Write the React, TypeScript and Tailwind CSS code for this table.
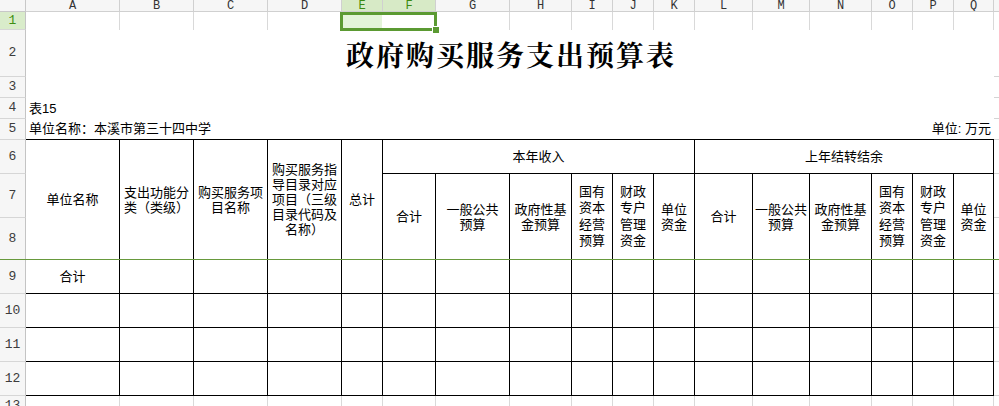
import React from 'react';

const COLS = ['A', 'B', 'C', 'D', 'E', 'F', 'G', 'H', 'I', 'J', 'K', 'L', 'M', 'N', 'O', 'P', 'Q'];

const CJK = "font-['Liberation_Sans','Noto_Sans_CJK_SC',sans-serif]";
const MONO = "font-['Liberation_Mono','DejaVu_Sans_Mono',monospace]";

// table cell: black right + bottom border, centered text
const cell = `border-r border-b border-black flex flex-col items-center justify-center text-center text-[13px] leading-[15px] text-black ${CJK}`;

const SUB_HEADERS: { lines: string[]; lead?: string }[] = [
  { lines: ['合计'] },
  { lines: ['一般公共', '预算'] },
  { lines: ['政府性基', '金预算'] },
  { lines: ['国有', '资本', '经营', '预算'], lead: 'leading-[16.5px]' },
  { lines: ['财政', '专户', '管理', '资金'], lead: 'leading-[16.5px]' },
  { lines: ['单位', '资金'] },
];

function RowHead({ n, active = false }: { n: number; active?: boolean }) {
  return (
    <div
      className={`flex items-center justify-center border-r border-b border-r-[#c4c4c4] border-b-[#d6d6d6] text-[13px] ${MONO} ${
        active ? 'bg-[#d9ecca] text-[#3f8f12]' : 'bg-[#f6f6f6] text-[#3c3c3c]'
      }`}
    >
      {n}
    </div>
  );
}

// column R, only a sliver of it is visible at the right edge
function Edge() {
  return <div className="border-b border-[#d4d4d4]" />;
}

function Lines({ lines }: { lines: string[] }) {
  return (
    <>
      {lines.map((l) => (
        <span key={l} className="whitespace-nowrap">
          {l}
        </span>
      ))}
    </>
  );
}

export default function App() {
  return (
    <div className="relative h-[406px] w-[999px] overflow-hidden bg-white">
      <div className="grid h-full grid-cols-[26px_94px_74px_74px_74px_41px_53px_74px_62px_41px_41px_41px_58px_57px_62px_41px_41px_40px_1fr] grid-rows-[12px_18px_47px_21px_21px_21px_34px_44px_42px_34px_34px_34px_34px_1fr]">
        {/* column headers */}
        <div className="border-r border-b border-[#c8c8c8] bg-[#f6f6f6]" />
        {COLS.map((c) => {
          const active = c === 'E' || c === 'F';
          return (
            <div
              key={c}
              className={`flex items-center justify-center overflow-hidden border-r border-b border-[#d0d0d0] text-[12px] leading-[10px] ${MONO} ${
                active ? 'bg-[#d7eac6] text-[#3c8a10]' : 'bg-[#f6f6f6] text-[#333]'
              }`}
            >
              {c}
            </div>
          );
        })}
        <div className="border-b border-[#d0d0d0] bg-[#f6f6f6]" />

        {/* row 1 */}
        <RowHead n={1} active />
        {COLS.map((c) => (
          <div
            key={c}
            className={`border-r ${c === 'E' ? 'border-white bg-[#e3f4d9]' : 'border-[#d9d9d9]'}`}
          />
        ))}
        <div />

        {/* row 2 : title */}
        <RowHead n={2} />
        <div className="col-span-17 flex items-center justify-center">
          <span className="pl-[2px] text-[28px] font-bold tracking-[2px] text-black font-['Noto_Serif_CJK_SC','Noto_Sans_CJK_SC',serif]">
            政府购买服务支出预算表
          </span>
        </div>
        <Edge />

        {/* row 3 */}
        <RowHead n={3} />
        <div className="col-span-17" />
        <Edge />

        {/* row 4 */}
        <RowHead n={4} />
        <div className={`col-span-17 flex items-center pl-[3px] text-[13px] text-black ${CJK}`}>表15</div>
        <Edge />

        {/* row 5 */}
        <RowHead n={5} />
        <div
          className={`col-span-17 flex items-center justify-between border-b border-black pl-[3px] pr-[3px] text-[13px] text-black ${CJK}`}
        >
          <span>单位名称：本溪市第三十四中学</span>
          <span>单位: 万元</span>
        </div>
        <Edge />

        {/* row 6 */}
        <RowHead n={6} />
        <div className={`${cell} row-span-3`}>单位名称</div>
        <div className={`${cell} row-span-3`}>
          <Lines lines={['支出功能分', '类（类级）']} />
        </div>
        <div className={`${cell} row-span-3`}>
          <Lines lines={['购买服务项', '目名称']} />
        </div>
        <div className={`${cell} row-span-3`}>
          <Lines lines={['购买服务指', '导目录对应', '项目（三级', '目录代码及', '名称）']} />
        </div>
        <div className={`${cell} row-span-3`}>总计</div>
        <div className={`${cell} col-span-6`}>本年收入</div>
        <div className={`${cell} col-span-6`}>上年结转结余</div>
        <Edge />

        {/* row 7 */}
        <RowHead n={7} />
        {SUB_HEADERS.map((h, i) => (
          <div key={'a' + i} className={`${cell} row-span-2 ${h.lead ?? ''}`}>
            <Lines lines={h.lines} />
          </div>
        ))}
        {SUB_HEADERS.map((h, i) => (
          <div key={'b' + i} className={`${cell} row-span-2 ${h.lead ?? ''}`}>
            <Lines lines={h.lines} />
          </div>
        ))}
        <Edge />

        {/* row 8 */}
        <RowHead n={8} />
        <Edge />

        {/* rows 9 - 12 */}
        {[9, 10, 11, 12].map((r) => (
          <React.Fragment key={r}>
            <RowHead n={r} />
            {COLS.map((c) => (
              <div key={c} className={cell}>
                {r === 9 && c === 'A' ? '合计' : null}
              </div>
            ))}
            <Edge />
          </React.Fragment>
        ))}

        {/* row 13, cut off */}
        <RowHead n={13} />
        {COLS.map((c) => (
          <div key={c} className="border-r border-[#d9d9d9]" />
        ))}
        <div />
      </div>

      {/* frozen pane line */}
      <div className="absolute left-0 right-0 top-[259px] h-px bg-[#67993c]" />

      {/* selection E1:F1 */}
      <div className="absolute left-[340px] top-[12px] h-[19px] w-[97px] border-[3px] border-[#5b9a32]" />
      <div className="absolute left-[432px] top-[26px] h-[8px] w-[8px] border border-white bg-[#5b9a32]" />
    </div>
  );
}
